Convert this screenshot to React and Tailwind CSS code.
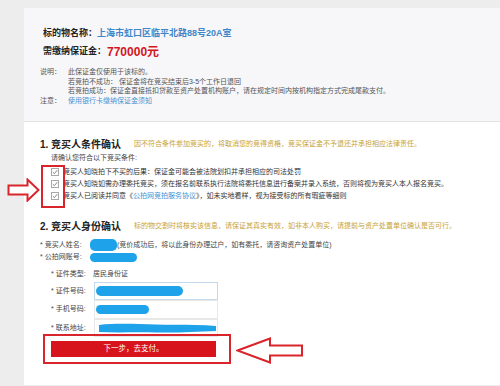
import React from 'react';

const Check = () => (
    <svg width="8" height="8" viewBox="0 0 8 8" className="shrink-0">
        <rect x="0.5" y="0.5" width="7" height="7" fill="#fff" stroke="#a8a8a8" />
        <path d="M1.8 4.1 L3.4 5.6 L6.3 2.2" fill="none" stroke="#777" strokeWidth="0.9" />
    </svg>
);

const Blob = ({ className }) => <div className={`bg-[#1ea2ea] rounded-[5px] ${className}`} />;

const InputRow = ({ label, focus, children }) => (
    <div className="h-[18.5px] flex items-stretch pl-[11px]">
        <div className="w-[43px] flex items-center whitespace-nowrap">{label}</div>
        <div className={`w-[124px] bg-white border ${focus ? 'border-[#c3daee]' : 'border-[#e8e8e8]'} flex items-center pl-[1px]`}>
            {children}
        </div>
    </div>
);

export default function App() {
    return (
        <div className="relative h-[386px] bg-[#ededed] pt-2 pl-6 overflow-hidden font-[family-name:'Liberation_Sans','Noto_Sans_CJK_SC',sans-serif] text-[#444]">
            <div className="bg-white h-[377px]">
                {/* 标的物信息 */}
                <div className="bg-[#f7f7f9] h-[114px] border-b border-[#e3e3e3] pt-[17px] pl-4">
                    <div className="h-[17px] flex items-center pl-[3px] text-[9px] font-bold">
                        <span className="text-[#222]">标的物名称：</span>
                        <span className="text-[#3e86c8]">上海市虹口区临平北路88号20A室</span>
                    </div>
                    <div className="h-[20px] flex items-center pl-[3px] font-bold">
                        <span className="text-[9px] text-[#222]">需缴纳保证金：</span>
                        <span className="text-[12px] text-[#d2161c] ml-[1px]">770000元</span>
                    </div>
                    <div className="mt-[5px] grid grid-cols-[28px_1fr] text-[7px] leading-[9.5px] text-[#555]">
                        <div>说明：</div>
                        <div>
                            <div>此保证金仅使用于该标的。</div>
                            <div>若竞拍不成功：&nbsp;保证金将在竞买结束后3-5个工作日退回</div>
                            <div>若竞拍成功：保证金直接抵扣贷款至资产处置机构账户，请在规定时间内按机构指定方式完成尾款支付。</div>
                        </div>
                        <div>注意：</div>
                        <div className="text-[#4a93d2]">使用银行卡缴纳保证金须知</div>
                    </div>
                </div>

                {/* 1. 竞买人条件确认 */}
                <div className="pt-[14.5px] pl-4">
                    <div className="h-4 flex items-center">
                        <div className="w-[94px] text-[10px] font-bold text-[#222] whitespace-nowrap">1. 竞买人条件确认</div>
                        <div className="text-[7px] text-[#c9a233] whitespace-nowrap">因不符合条件参加竞买的，将取消您的竞得资格，竞买保证金不予退还并承担相应法律责任。</div>
                    </div>
                    <div className="h-[11px] flex items-center pl-[11px] text-[7px]">请确认您符合以下竞买条件:</div>
                    <div className="mt-[2.5px] pl-[11px] text-[7px] text-[#333]">
                        <div className="h-3 flex items-center gap-1 whitespace-nowrap">
                            <Check />
                            <span>竞买人知晓拍下不买的后果：保证金可能会被法院划扣并承担相应的司法处罚</span>
                        </div>
                        <div className="h-3 flex items-center gap-1 whitespace-nowrap">
                            <Check />
                            <span>竞买人知晓如需办理委托竞买，须在报名前联系执行法院将委托信息进行备案并录入系统，否则将视为竞买人本人报名竞买。</span>
                        </div>
                        <div className="h-3 flex items-center gap-1 whitespace-nowrap">
                            <Check />
                            <span>
                                竞买人已阅读并同意《<span className="text-[#3e8fd2]">公拍网竞拍服务协议</span>》，如未实地看样，视为接受标的所有瑕疵等细则
                            </span>
                        </div>
                    </div>

                    {/* 2. 竞买人身份确认 */}
                    <div className="mt-[16.5px] h-4 flex items-center">
                        <div className="w-[94px] text-[10px] font-bold text-[#222] whitespace-nowrap">2. 竞买人身份确认</div>
                        <div className="text-[7px] text-[#c9a233] whitespace-nowrap">标的物交割时将核实该信息，请保证其真实有效，如非本人购买，请提前与资产处置单位确认是否可行。</div>
                    </div>
                    <div className="mt-[4.5px] text-[7px]">
                        <div className="h-3 flex items-center whitespace-nowrap">
                            <div className="w-[50px]">* 竞买人姓名:</div>
                            <Blob className="w-[27px] h-3" />
                            <span>(竞价成功后，将以此身份办理过户，如有委托，请咨询资产处置单位)</span>
                        </div>
                        <div className="h-3 flex items-center whitespace-nowrap">
                            <div className="w-[50px]">* 公拍网账号:</div>
                            <Blob className="w-[47px] h-[9px] rounded-full" />
                        </div>
                        <div className="mt-[5px] h-3 flex items-center pl-[11px] whitespace-nowrap">
                            <div className="w-[42px]">* 证件类型:</div>
                            <span>居民身份证</span>
                        </div>
                        <div className="mt-[1.5px]">
                            <InputRow label="* 证件号码:" focus>
                                <Blob className="w-[87px] h-[10px] rounded-[3px]" />
                            </InputRow>
                            <InputRow label="* 手机号码:">
                                <Blob className="w-[53px] h-[9px] rounded-full" />
                            </InputRow>
                            <InputRow label="* 联系地址:">
                                <svg width="122" height="12" viewBox="0 0 122 12" className="mt-[1px]">
                                    <path d="M3 3 C20 1 40 2 60 2.5 C80 3 100 2 121 4 L121 9 C100 10 80 11 60 10.5 C40 10 20 11 3 10 Z" fill="#1ea2ea" />
                                </svg>
                            </InputRow>
                        </div>
                        <div className="relative -mt-[3px] ml-[3px] w-[188px] h-[30px] border-2 border-[#d9242b] pl-[6px] pt-[5px]">
                            <button className="w-[165px] h-4 bg-[#d7141c] text-white text-[7.5px] flex items-center justify-center">
                                下一步，去支付。
                            </button>
                        </div>
                    </div>
                </div>
            </div>

            {/* 标注 */}
            <div className="absolute left-[41px] top-[165px] w-[24px] h-[43px] border-2 border-[#d9242b]" />
            <svg className="absolute left-[7px] top-[178px]" width="33" height="24" viewBox="0 0 33 24">
                <path d="M1.5 7.5 L20.5 7.5 L20.5 1.5 L31.5 12 L20.5 22.5 L20.5 16.5 L1.5 16.5 Z" fill="#fff" stroke="#d9242b" strokeWidth="2" />
            </svg>
            <svg className="absolute left-[236px] top-[337px]" width="68" height="27" viewBox="0 0 68 27">
                <path d="M1.5 13.5 L34 1.5 L34 8.5 L66 8.5 L66 18.5 L34 18.5 L34 25.5 Z" fill="#fff" stroke="#d9242b" strokeWidth="2" />
            </svg>
        </div>
    );
}
